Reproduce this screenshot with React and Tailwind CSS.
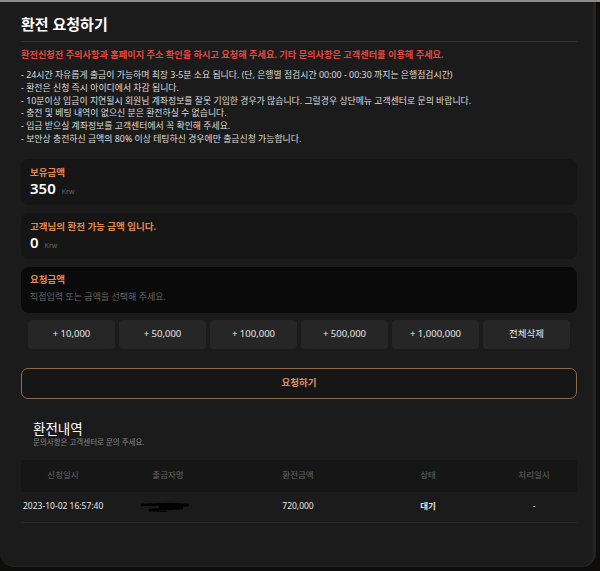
const notices = [
  '- 24시간 자유롭게 출금이 가능하며 최장 3-5분 소요 됩니다. (단, 은행별 점검시간 00:00 - 00:30 까지는 은행점검시간)',
  '- 환전은 신청 즉시 아이디에서 차감 됩니다.',
  '- 10분이상 입금이 지연될시 회원님 계좌정보를 잘못 기입한 경우가 많습니다. 그럴경우 상단메뉴 고객센터로 문의 바랍니다.',
  '- 충전 및 베팅 내역이 없으신 분은 환전하실 수 없습니다.',
  '- 입금 받으실 계좌정보를 고객센터에서 꼭 확인해 주세요.',
  '- 보안상 충전하신 금액의 80% 이상 테팅하신 경우에만 출금신청 가능합니다.',
]

const amounts = ['+ 10,000', '+ 50,000', '+ 100,000', '+ 500,000', '+ 1,000,000', '전체삭제']

const cols = 'grid grid-cols-[84px_126px_134px_126px_86px]'

const BalanceCard = ({ label, value }) => (
  <div className="rounded-lg bg-[#151515] px-[9px] pt-[7px] pb-[8px]">
    <div className="text-[9.5px] font-bold leading-[13px] text-[#e38b4f]">{label}</div>
    <div className="flex h-[18px] items-baseline gap-[6px]">
      <span className="text-[15px] font-semibold leading-[18px] text-white">{value}</span>
      <span className="text-[7px] leading-[10px] text-[#666]">Krw</span>
    </div>
  </div>
)

export default function App() {
  return (
    <div
      className="h-[571px] w-[600px] overflow-hidden bg-[#0e0d0c] text-[#ddd]"
      style={{ fontFamily: '"Noto Sans", "Noto Sans CJK KR", sans-serif' }}
    >
      <div className="h-[2px] bg-[#8c8c8c]" />
      <div className="h-[565px] w-[596px] rounded-b-[14px] border-r-[3px] border-b border-[#242424] bg-[#1b1b1b] pl-[21px] pr-[16px]">
        {/* header */}
        <div className="border-b border-[#333] pt-[14px] pb-[9px] text-[15px] font-bold leading-[16px] text-white">
          환전 요청하기
        </div>

        <div className="pt-[6px] text-[9.2px] font-bold leading-[14px] text-[#e5473f]">
          환전신청전 주의사항과 홈페이지 주소 확인을 하시고 요청해 주세요. 기타 문의사항은 고객센터를 이용해 주세요.
        </div>

        <ul className="pt-[7px] text-[8.9px] leading-[12.8px] text-[#ddd]">
          {notices.map((n) => (
            <li key={n}>{n}</li>
          ))}
        </ul>

        {/* balances */}
        <div className="flex flex-col gap-[8px] pt-[13px]">
          <BalanceCard label="보유금액" value="350" />
          <BalanceCard label="고객님의 환전 가능 금액 입니다." value="0" />
          <div className="rounded-lg bg-[#0a0a0a] px-[9px] pt-[6px] pb-[10px]">
            <div className="text-[9.5px] font-bold leading-[13px] text-[#e38b4f]">요청금액</div>
            <div className="pt-[5px] text-[9px] leading-[12px] text-[#666]">직접입력 또는 금액을 선택해 주세요.</div>
          </div>
        </div>

        {/* quick amount buttons */}
        <div className="grid grid-cols-6 gap-[4px] px-[7px] pt-[7px]">
          {amounts.map((a) => (
            <button
              key={a}
              className="h-[29px] rounded-[4px] bg-[#262626] text-[9.5px] text-[#e6e6e6]"
            >
              {a}
            </button>
          ))}
        </div>

        <button className="mt-[19px] h-[31px] w-full rounded-[7px] border border-[#8a6a48] bg-[#161616] text-[9.5px] font-bold text-[#e0915a]">
          요청하기
        </button>

        {/* history */}
        <div className="px-[12px] pt-[22px]">
          <div className="text-[13.5px] leading-[16px] text-white">환전내역</div>
          <div className="text-[7.5px] leading-[11px] text-[#888]">문의사항은 고객센터로 문의 주세요.</div>
        </div>

        <div className="pt-[12px] text-[8.5px]">
          <div className={`${cols} h-[32px] items-center bg-[#161616] text-center text-[#666]`}>
            <div>신청일시</div>
            <div>출금자명</div>
            <div>환전금액</div>
            <div>상태</div>
            <div>처리일시</div>
          </div>
          <div className={`${cols} h-[31px] items-center border-b border-[#2a2a2a] text-center text-[#e6e6e6]`}>
            <div className="whitespace-nowrap text-left pl-[2px]">2023-10-02 16:57:40</div>
            <div className="flex justify-center pr-[6px]">
              <svg width="52" height="10" viewBox="0 0 52 10">
                <path d="M2 3 L30 2 L50 3 L20 5 L44 6 L10 8 L28 9" stroke="#000" strokeWidth="2.5" fill="none" />
              </svg>
            </div>
            <div>720,000</div>
            <div className="font-bold">대기</div>
            <div>-</div>
          </div>
        </div>
      </div>
    </div>
  )
}
